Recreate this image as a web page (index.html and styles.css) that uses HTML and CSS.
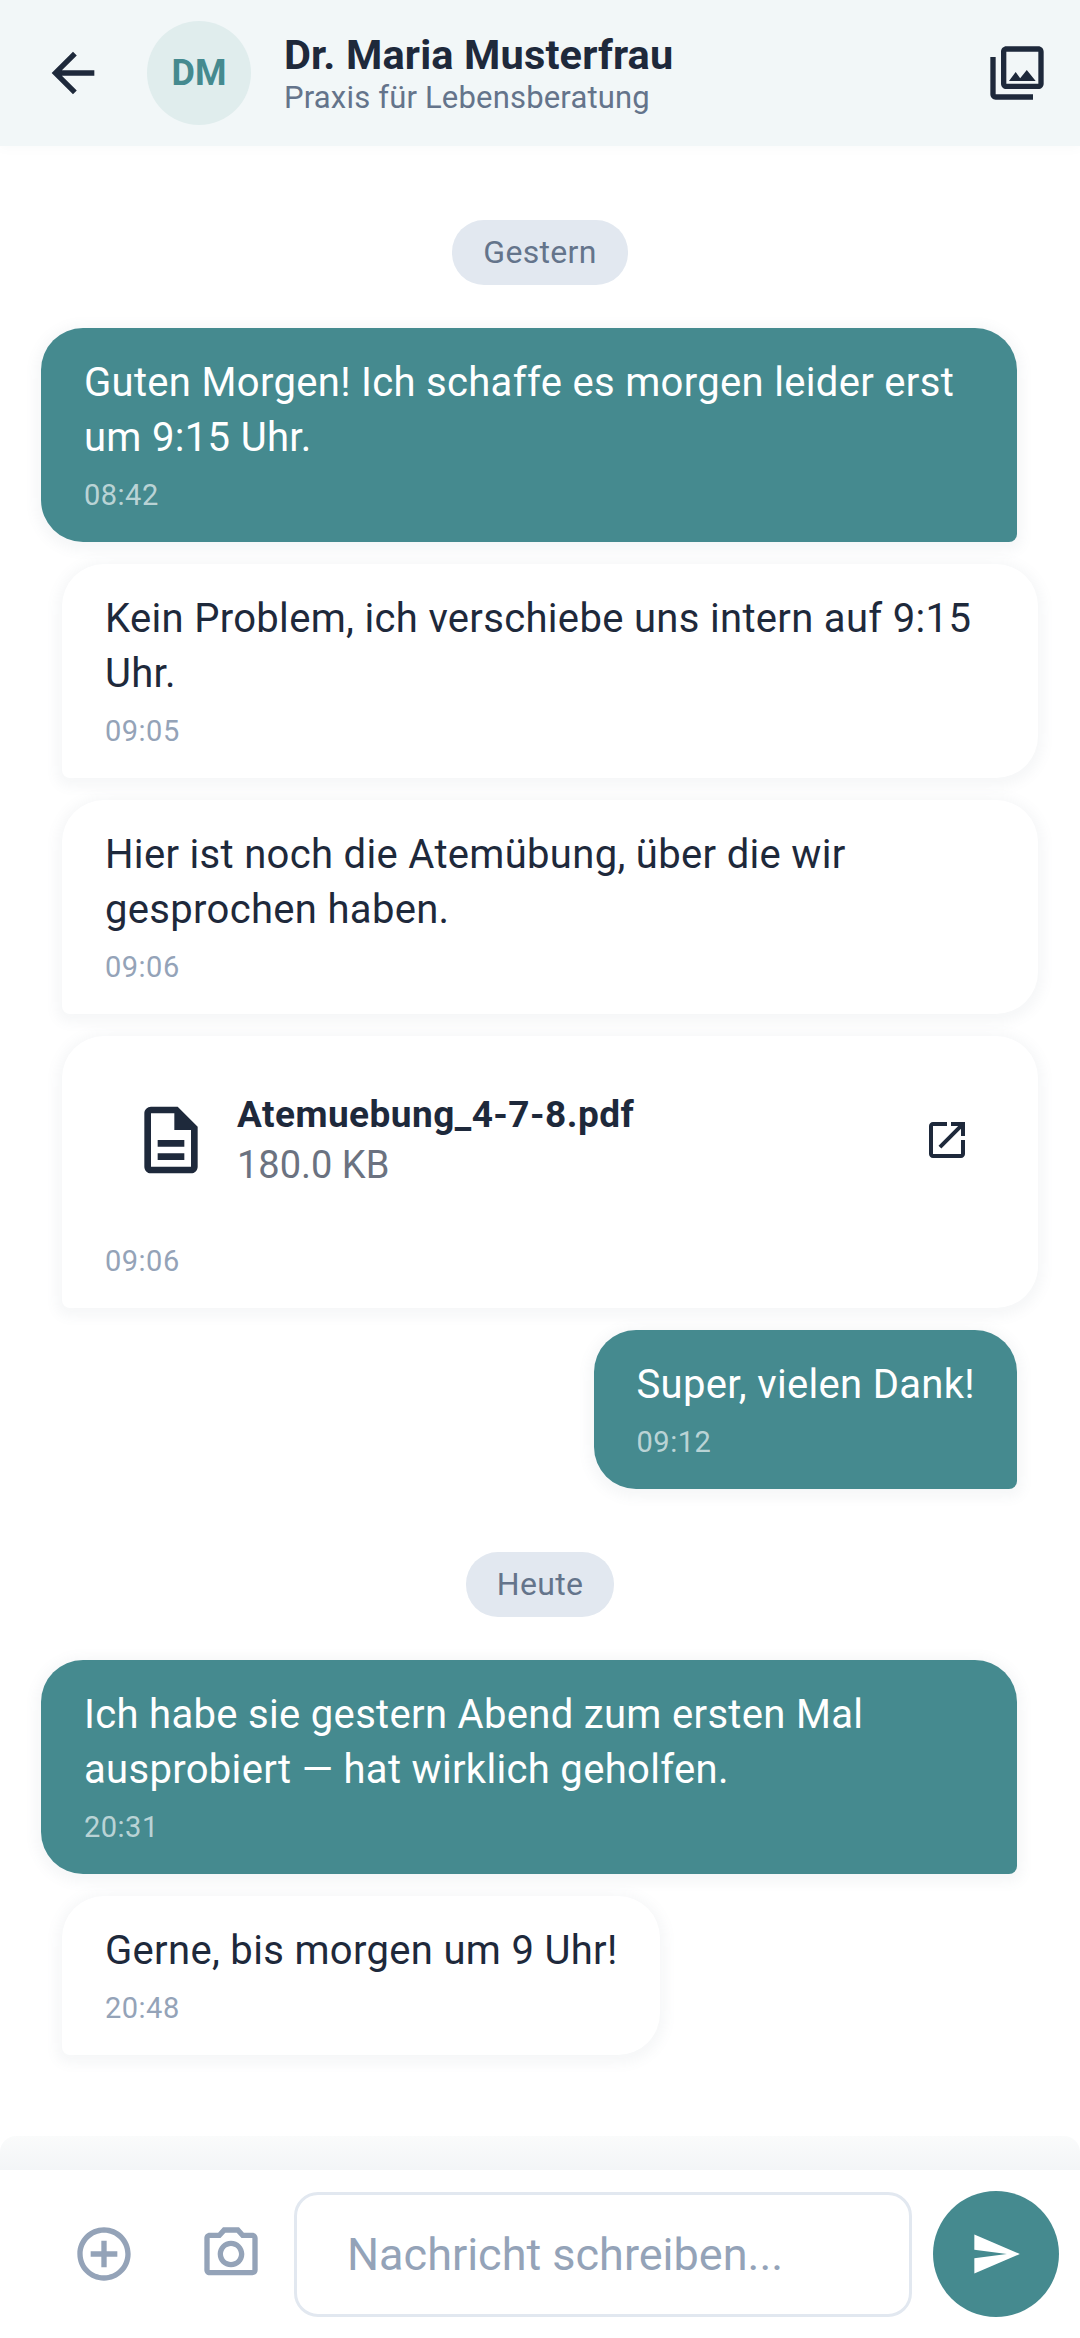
FILE: index.html
```html
<!DOCTYPE html>
<html lang="de">

<head>
    <meta charset="UTF-8">
    <meta name="viewport" content="width=device-width, initial-scale=1.0">
    <title>Dr. Maria Musterfrau</title>
    <link rel="stylesheet" href="styles.css">
</head>

<body>
    <header class="top-bar">
        <svg class="icon back-icon" viewBox="0 0 24 24"><path d="M20 11H7.83l5.59-5.59L12 4l-8 8 8 8 1.41-1.41L7.83 13H20v-2z"/></svg>
        <div class="avatar">DM</div>
        <div class="contact">
            <div class="contact-name">Dr. Maria Musterfrau</div>
            <div class="contact-sub">Praxis für Lebensberatung</div>
        </div>
        <svg class="icon gallery-icon" viewBox="0 0 24 24"><path d="M20 4v12H8V4h12m0-2H8c-1.1 0-2 .9-2 2v12c0 1.1.9 2 2 2h12c1.1 0 2-.9 2-2V4c0-1.1-.9-2-2-2zm-8.5 9.67l1.69 2.26 2.48-3.1L19 15H9zM2 6v14c0 1.1.9 2 2 2h14v-2H4V6H2z"/></svg>
    </header>

    <main class="messages">
        <div class="day-chip chip-first">Gestern</div>

        <div class="bubble sent">
            <p>Guten Morgen! Ich schaffe es morgen leider erst um 9:15 Uhr.</p>
            <span class="time">08:42</span>
        </div>

        <div class="bubble received">
            <p>Kein Problem, ich verschiebe uns intern auf 9:15 Uhr.</p>
            <span class="time">09:05</span>
        </div>

        <div class="bubble received">
            <p>Hier ist noch die Atemübung, über die wir gesprochen haben.</p>
            <span class="time">09:06</span>
        </div>

        <div class="bubble received file-bubble">
            <div class="file-row">
                <svg class="icon file-icon" viewBox="0 0 24 24"><path d="M8 16h8v2H8zm0-4h8v2H8zm6-10H6c-1.1 0-2 .9-2 2v16c0 1.1.89 2 1.99 2H18c1.1 0 2-.9 2-2V8l-6-6zm4 18H6V4h7v5h5v11z"/></svg>
                <div class="file-info">
                    <div class="file-name">Atemuebung_4-7-8.pdf</div>
                    <div class="file-size">180.0 KB</div>
                </div>
                <svg class="icon open-icon" viewBox="0 0 24 24"><path d="M19 19H5V5h7V3H5c-1.11 0-2 .9-2 2v14c0 1.1.89 2 2 2h14c1.1 0 2-.9 2-2v-7h-2v7zM14 3v2h3.59l-9.83 9.83 1.41 1.41L19 6.41V10h2V3h-7z"/></svg>
            </div>
            <span class="time">09:06</span>
        </div>

        <div class="bubble sent">
            <p>Super, vielen Dank!</p>
            <span class="time">09:12</span>
        </div>

        <div class="day-chip">Heute</div>

        <div class="bubble sent">
            <p>Ich habe sie gestern Abend zum ersten Mal ausprobiert — hat wirklich geholfen.</p>
            <span class="time">20:31</span>
        </div>

        <div class="bubble received">
            <p>Gerne, bis morgen um 9 Uhr!</p>
            <span class="time">20:48</span>
        </div>
    </main>

    <footer class="composer">
        <svg class="icon add-icon" viewBox="0 0 24 24"><path d="M13 7h-2v4H7v2h4v4h2v-4h4v-2h-4V7zm-1-5C6.48 2 2 6.48 2 12s4.48 10 10 10 10-4.48 10-10S17.52 2 12 2zm0 18c-4.41 0-8-3.59-8-8s3.59-8 8-8 8 3.59 8 8-3.59 8-8 8z"/></svg>
        <svg class="icon camera-icon" viewBox="0 0 24 24"><path d="M14.12 4l1.83 2H20v12H4V6h4.05l1.83-2h4.24M15 2H9L7.17 4H4c-1.1 0-2 .9-2 2v12c0 1.1.9 2 2 2h16c1.1 0 2-.9 2-2V6c0-1.1-.9-2-2-2h-3.17L15 2zm-3 7c1.65 0 3 1.35 3 3s-1.35 3-3 3-3-1.35-3-3 1.35-3 3-3m0-2c-2.76 0-5 2.24-5 5s2.24 5 5 5 5-2.24 5-5-2.24-5-5-5z"/></svg>
        <div class="input-box">Nachricht schreiben...</div>
        <div class="send-button">
            <svg class="icon send-icon" viewBox="0 0 24 24"><path d="M2.01 21L23 12 2.01 3 2 10l15 2-15 2z"/></svg>
        </div>
    </footer>
</body>

</html>
```

FILE: styles.css
```css
html {
    background-color: #ffffff;
    font-family: Roboto, "Liberation Sans", sans-serif;
}

body {
    margin: 0;
    height: 2338px;
    display: flex;
    flex-direction: column;
    overflow: hidden;
    color: #1e293b;
}

.icon {
    display: block;
    flex: none;
    fill: currentColor;
}

/* header */
.top-bar {
    flex: none;
    height: 146px;
    display: flex;
    align-items: center;
    padding: 0 31px 0 41px;
    background-color: #f2f7f8;
    box-shadow: 0 2px 10px rgba(100, 116, 139, 0.04);
}

.back-icon {
    width: 64px;
    height: 64px;
}

.avatar {
    flex: none;
    width: 104px;
    height: 104px;
    margin-left: 42px;
    border-radius: 50%;
    display: flex;
    align-items: center;
    justify-content: center;
    background-color: #e0eded;
    color: #458a8f;
    font-size: 36px;
    font-weight: 700;
}

.contact {
    flex: 1;
    margin-left: 33px;
}

.contact-name {
    font-size: 41.5px;
    font-weight: 700;
    line-height: 50px;
    letter-spacing: 0.15px;
}

.contact-sub {
    font-size: 31px;
    line-height: 36px;
    letter-spacing: 0.18px;
    color: #64748b;
}

.gallery-icon {
    width: 64px;
    height: 64px;
}

/* messages */
.messages {
    flex: 1;
    display: flex;
    flex-direction: column;
}

.day-chip {
    align-self: center;
    height: 65px;
    line-height: 65px;
    padding: 0 31px;
    margin: 41px 0 43px;
    border-radius: 32px;
    background-color: #e2e8f0;
    color: #64748b;
    font-size: 32px;
    letter-spacing: 0.3px;
}

.chip-first {
    margin-top: 74px;
}

.bubble {
    box-sizing: border-box;
    max-width: 976px;
    padding: 27px 42px 29px 43px;
    margin-bottom: 22px;
    border-radius: 42px;
    box-shadow: 0 3px 12px 6px rgba(100, 116, 139, 0.06);
}

.bubble p {
    margin: 0;
    font-size: 40px;
    line-height: 55px;
    letter-spacing: 0.32px;
}

.time {
    display: block;
    margin-top: 12px;
    font-size: 29px;
    line-height: 36px;
    letter-spacing: 0.5px;
}

.sent {
    align-self: flex-end;
    margin-right: 63px;
    border-bottom-right-radius: 8px;
    background-color: #458a8f;
    color: #ffffff;
}

.sent .time {
    color: rgba(255, 255, 255, 0.65);
}

.received {
    align-self: flex-start;
    margin-left: 62px;
    border-bottom-left-radius: 8px;
    background-color: #ffffff;
}

.received .time {
    color: #94a3b8;
}

/* file attachment */
.file-bubble {
    width: 976px;
}

.file-row {
    display: flex;
    align-items: center;
    padding: 26px 25px 40px 26px;
}

.file-icon {
    width: 80px;
    height: 80px;
}

.file-info {
    flex: 1;
    margin-left: 26px;
}

.file-name {
    font-size: 37px;
    font-weight: 700;
    line-height: 51px;
    letter-spacing: 0.45px;
}

.file-size {
    font-size: 38px;
    line-height: 51px;
    color: #6b7280;
}

.open-icon {
    width: 48px;
    height: 48px;
}

/* composer */
.composer {
    position: relative;
    flex: none;
    height: 168px;
    display: flex;
    align-items: center;
    padding: 0 21px 0 72px;
    background-color: #ffffff;
}

.composer::before {
    content: "";
    position: absolute;
    left: 0;
    right: 0;
    top: -34px;
    height: 34px;
    border-radius: 16px 16px 0 0;
    background: linear-gradient(#fafbfb, #f3f5f7);
}

.add-icon,
.camera-icon {
    width: 64px;
    height: 64px;
    color: #94a3b8;
}

.camera-icon {
    margin-left: 63px;
}

.input-box {
    box-sizing: border-box;
    flex: 1;
    height: 125px;
    margin: 0 21px 0 31px;
    padding-left: 50px;
    line-height: 119px;
    border: 3px solid #e2e8f0;
    border-radius: 24px;
    color: #94a3b8;
    font-size: 45px;
}

.send-button {
    flex: none;
    width: 126px;
    height: 126px;
    border-radius: 50%;
    display: flex;
    align-items: center;
    justify-content: center;
    background-color: #458a8f;
    color: #ffffff;
}

.send-icon {
    width: 52px;
    height: 52px;
}
```
